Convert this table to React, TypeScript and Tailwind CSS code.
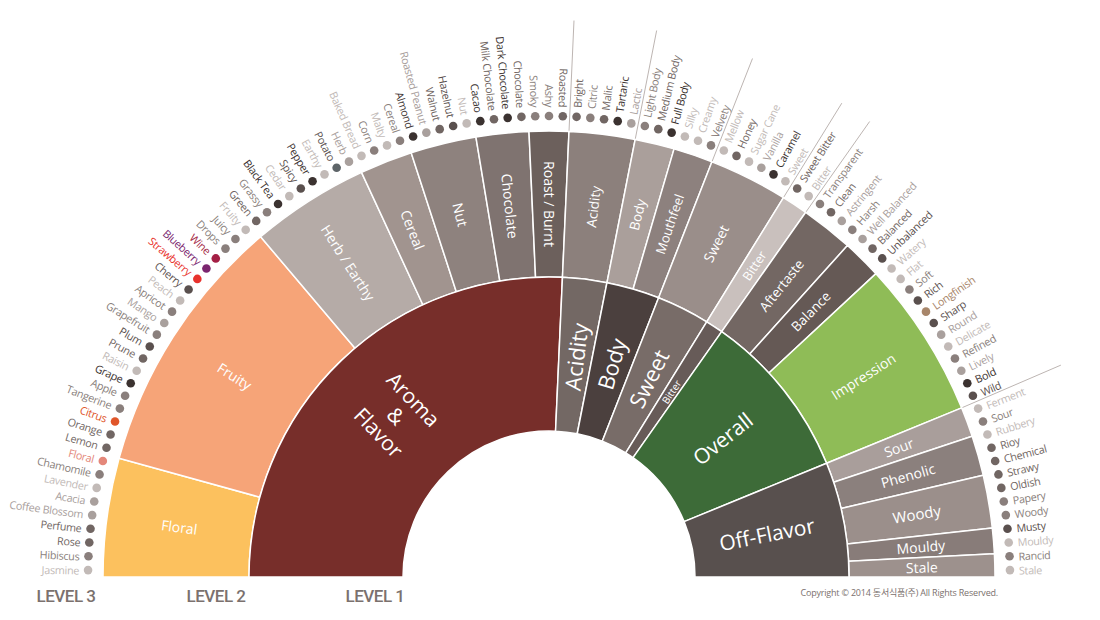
import React from "react";

const CX = 549;
const CY = 577;
const STEP = 180 / 105;
const ang = (i: number) => 180 - i * STEP;
const rad = (a: number) => (a * Math.PI) / 180;
const P = (r: number, a: number): [number, number] => [
  CX + r * Math.cos(rad(a)),
  CY - r * Math.sin(rad(a)),
];

function sector(r0: number, r1: number, a1: number, a2: number) {
  const [x1, y1] = P(r1, a1);
  const [x2, y2] = P(r1, a2);
  const [x3, y3] = P(r0, a2);
  const [x4, y4] = P(r0, a1);
  const large = a1 - a2 > 180 ? 1 : 0;
  return `M${x1} ${y1} A${r1} ${r1} 0 ${large} 1 ${x2} ${y2} L${x3} ${y3} A${r0} ${r0} 0 ${large} 0 ${x4} ${y4} Z`;
}

const D1 = "#3b3230";
const D2 = "#5a504e";
const M1 = "#716663";
const M2 = "#8a7f7c";
const L1 = "#a9a09d";
const L2 = "#c2bab7";

type Item = [string, string, string?];
const ITEMS: Item[] = [
  ["Jasmine", L2], ["Hibiscus", M2], ["Rose", M1], ["Perfume", M1], ["Coffee Blossom", L1],
  ["Acacia", L1], ["Lavender", L2], ["Chamomile", M2], ["Floral", "#e4877a"],
  ["Lemon", M1], ["Orange", M1], ["Citrus", "#e0562a"], ["Tangerine", M2], ["Apple", M2],
  ["Grape", D1], ["Raisin", L2], ["Prune", M1], ["Plum", D2], ["Grapefruit", M2],
  ["Mango", L1], ["Apricot", M2], ["Peach", L2], ["Cherry", D2], ["Strawberry", "#e8322d"],
  ["Blueberry", "#7b266f"], ["Wine", "#a41f45"], ["Drops", M2], ["Juicy", M2], ["Fruity", L2],
  ["Green", M1], ["Grassy", M2], ["Black Tea", D1], ["Cedar", L2], ["Spicy", D2],
  ["Pepper", D1], ["Earthy", L2], ["Potato", D2, "#5d6468"], ["Herb", L1],
  ["Baked Bread", L2], ["Corn", M2], ["Malty", L2], ["Cereal", M2],
  ["Almond", D1], ["Roasted Peanut", L1], ["Walnut", M1], ["Hazelnut", D2], ["Nut", L2],
  ["Cacao", D1], ["Milk Chocolate", M1], ["Dark Chocolate", D1], ["Chocolate", M1],
  ["Smoky", M2], ["Ashy", M2], ["Roasted", M1],
  ["Bright", M1], ["Citric", M2], ["Malic", M1], ["Tartaric", D1], ["Lactic", L1],
  ["Light Body", M2], ["Medium Body", M1], ["Full Body", D1],
  ["Silky", L2], ["Creamy", L2], ["Velvety", M2],
  ["Mellow", L2], ["Honey", M1], ["Sugar Cane", L2], ["Vanilla", L1], ["Caramel", D1], ["Sweet", L2],
  ["Sweet Bitter", M1], ["Bitter", L2],
  ["Transparent", M2], ["Clean", M1], ["Astringent", L1], ["Harsh", M2],
  ["Well Balanced", L1], ["Balanced", M1], ["Unbalanced", D2],
  ["Watery", L2], ["Flat", L2], ["Soft", M2], ["Rich", D2], ["Longfinish", "#a8866a"],
  ["Sharp", D2], ["Round", L1], ["Delicate", L2], ["Refined", M2], ["Lively", L1],
  ["Bold", D1], ["Wild", D2],
  ["Ferment", L2], ["Sour", M2], ["Rubbery", L2], ["Rioy", M1], ["Chemical", M1],
  ["Strawy", M1], ["Oldish", M1], ["Papery", M2], ["Woody", M2], ["Musty", D2],
  ["Mouldy", L2], ["Rancid", M2], ["Stale", L2],
];

type Seg = { a1: number; a2: number; color: string; label: string; size: number; left?: boolean };

const L1SEGS: Seg[] = [
  { a1: ang(0), a2: ang(54), color: "#772e2a", label: "", size: 21, left: true },
  { a1: ang(54), a2: ang(59), color: "#736864", label: "Acidity", size: 22 },
  { a1: ang(59), a2: ang(65), color: "#4b403e", label: "Body", size: 22 },
  { a1: ang(65), a2: ang(71), color: "#786c68", label: "Sweet", size: 22 },
  { a1: ang(71), a2: ang(73), color: "#675b58", label: "Bitter", size: 10 },
  { a1: ang(73), a2: ang(92), color: "#3d6b38", label: "Overall", size: 21 },
  { a1: ang(92), a2: 0, color: "#58504e", label: "Off-Flavor", size: 21 },
];

const L2SEGS: Seg[] = [
  { a1: ang(0), a2: ang(9), color: "#fcc15e", label: "Floral", size: 14, left: true },
  { a1: ang(9), a2: ang(29), color: "#f6a478", label: "Fruity", size: 14, left: true },
  { a1: ang(29), a2: ang(38), color: "#b5aba7", label: "Herb / Earthy", size: 14, left: true },
  { a1: ang(38), a2: ang(42), color: "#a1948f", label: "Cereal", size: 14, left: true },
  { a1: ang(42), a2: ang(47), color: "#8e827e", label: "Nut", size: 14, left: true },
  { a1: ang(47), a2: ang(51), color: "#7f7370", label: "Chocolate", size: 14, left: true },
  { a1: ang(51), a2: ang(54), color: "#6c605c", label: "Roast / Burnt", size: 14, left: true },
  { a1: ang(54), a2: ang(59), color: "#8c807c", label: "Acidity", size: 13.5 },
  { a1: ang(59), a2: ang(62), color: "#aa9f9b", label: "Body", size: 13.5 },
  { a1: ang(62), a2: ang(65), color: "#8d817e", label: "Mouthfeel", size: 13 },
  { a1: ang(65), a2: ang(71), color: "#9a8e8a", label: "Sweet", size: 14 },
  { a1: ang(71), a2: ang(73), color: "#c9c0bd", label: "Bitter", size: 12.5 },
  { a1: ang(73), a2: ang(77), color: "#736763", label: "Aftertaste", size: 13.5 },
  { a1: ang(77), a2: ang(80), color: "#655955", label: "Balance", size: 13.5 },
  { a1: ang(80), a2: ang(92), color: "#8fbc57", label: "Impression", size: 14 },
  { a1: ang(92), a2: 18.4, color: "#a99e9b", label: "Sour", size: 14 },
  { a1: 18.4, a2: 13.2, color: "#8b807d", label: "Phenolic", size: 14 },
  { a1: 13.2, a2: 6.3, color: "#9b8f8b", label: "Woody", size: 15 },
  { a1: 6.3, a2: 3.0, color: "#887c79", label: "Mouldy", size: 14 },
  { a1: 3.0, a2: 0, color: "#9d918d", label: "Stale", size: 14 },
];

const LINES = [54, 59, 65, 71, 73];

function SegLabel({ seg, r }: { seg: Seg; r: number }) {
  const a = (seg.a1 + seg.a2) / 2;
  const [x, y] = P(r, a);
  const rot = seg.left ? 180 - a : -a;
  return (
    <text
      x={x}
      y={y}
      transform={`rotate(${rot} ${x} ${y})`}
      textAnchor="middle"
      dominantBaseline="central"
      fill="#ffffff"
      fontSize={seg.size}
    >
      {seg.label}
    </text>
  );
}

function Wheel() {
  const aromaMid = (180 + ang(54)) / 2;
  const [ax, ay] = P(222, aromaMid);
  return (
    <svg
      width={1100}
      height={585}
      viewBox="0 0 1100 585"
      className="block font-['Open_Sans',sans-serif]"
    >
      {LINES.map((i) => {
        const [x1, y1] = P(446, ang(i));
        const [x2, y2] = P(557, ang(i));
        return <line key={i} x1={x1} y1={y1} x2={x2} y2={y2} stroke="#bdb5b2" strokeWidth={1} />;
      })}
      {(() => {
        const [x1, y1] = P(446, ang(92));
        const [x2, y2] = P(554, ang(92) + 0.2);
        return <line x1={x1} y1={y1} x2={x2} y2={y2} stroke="#bdb5b2" strokeWidth={1} />;
      })()}

      {L2SEGS.map((s, i) => (
        <path key={"l2" + i} d={sector(300, 446, s.a1, s.a2)} fill={s.color} stroke="#fff" strokeWidth={1.5} strokeLinejoin="round" />
      ))}
      {L1SEGS.map((s, i) => (
        <path key={"l1" + i} d={sector(146, 300, s.a1, s.a2)} fill={s.color} stroke="#fff" strokeWidth={1.5} strokeLinejoin="round" />
      ))}

      {L2SEGS.map((s, i) => (
        <SegLabel key={"t2" + i} seg={s} r={373} />
      ))}
      {L1SEGS.slice(1).map((s, i) => (
        <SegLabel key={"t1" + i} seg={s} r={222} />
      ))}
      <text
        x={ax}
        y={ay}
        transform={`rotate(${180 - aromaMid} ${ax} ${ay})`}
        textAnchor="middle"
        dominantBaseline="central"
        fill="#fff"
        fontSize={21}
      >
        <tspan x={ax} dy={-25}>Aroma</tspan>
        <tspan x={ax} dy={24}>&amp;</tspan>
        <tspan x={ax} dy={24}>Flavor</tspan>
      </text>

      {ITEMS.map(([label, color, dot], i) => {
        const a = ang(i + 0.5);
        const left = i < 54;
        const [dx, dy] = P(461, a);
        const [tx, ty] = P(470, a);
        const rot = left ? 180 - a : -a;
        return (
          <g key={"i" + i}>
            <circle cx={dx} cy={dy} r={4.3} fill={dot || color} />
            <text
              x={tx}
              y={ty}
              transform={`rotate(${rot} ${tx} ${ty})`}
              textAnchor={left ? "end" : "start"}
              dominantBaseline="central"
              fill={color}
              fontSize={10.8}
              fontWeight={500}
              letterSpacing={-0.3}
            >
              {label}
            </text>
          </g>
        );
      })}
    </svg>
  );
}

export default function App() {
  return (
    <div className="w-[1100px] h-[620px] bg-white flex flex-col overflow-hidden">
      <Wheel />
      <div className="flex items-center h-[24px] text-[#7b716e]">
        <span className="w-[132px] text-center text-[17px] font-medium tracking-[-0.5px] font-['Roboto',sans-serif]">
          LEVEL 3
        </span>
        <span className="w-[168px] text-center text-[17px] font-medium tracking-[-0.5px] font-['Roboto',sans-serif]">
          LEVEL 2
        </span>
        <span className="w-[150px] text-center text-[17px] font-medium tracking-[-0.5px] font-['Roboto',sans-serif]">
          LEVEL 1
        </span>
        <span className="flex-1" />
        <span className="pr-[102px] pb-[8px] text-[9px] tracking-[-0.2px] font-['Open_Sans','Noto_Sans_CJK_KR',sans-serif]">
          Copyright © 2014 동서식품(주) All Rights Reserved.
        </span>
      </div>
    </div>
  );
}
